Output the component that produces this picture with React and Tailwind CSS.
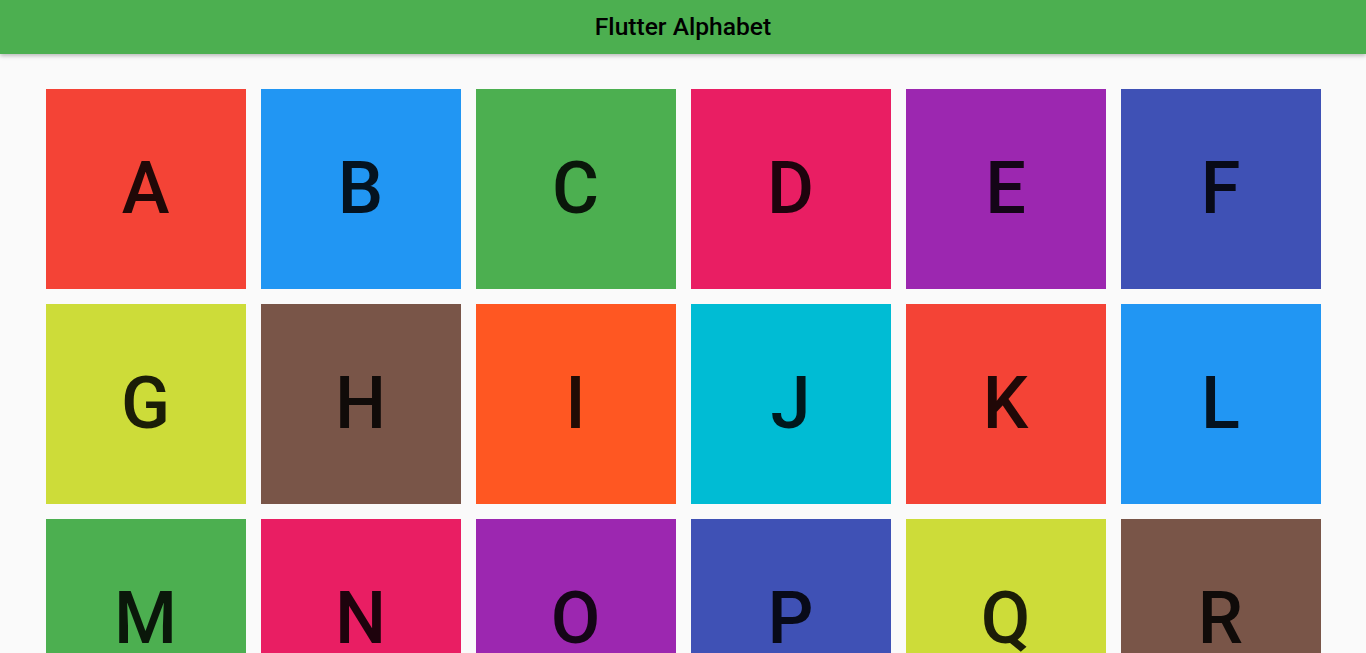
const colors = [
  "bg-[#F44336]",
  "bg-[#2196F3]",
  "bg-[#4CAF50]",
  "bg-[#E91E63]",
  "bg-[#9C27B0]",
  "bg-[#3F51B5]",
  "bg-[#CDDC39]",
  "bg-[#795548]",
  "bg-[#FF5722]",
  "bg-[#00BCD4]",
];

const letters = "ABCDEFGHIJKLMNOPQRSTUVWXYZ".split("");

export default function App() {
  return (
    <div
      className="min-h-screen bg-[#FAFAFA]"
      style={{ fontFamily: "Roboto, 'Noto Sans', sans-serif" }}
    >
      <header className="relative z-10 h-[54px] bg-[#4CAF50] flex items-center justify-center shadow-[0_2px_4px_rgba(0,0,0,0.25)]">
        <h1 className="text-[24.6px] font-medium text-black leading-none">Flutter Alphabet</h1>
      </header>
      <main className="flex justify-center pt-[35px] pb-[35px]">
        <div className="grid grid-cols-[repeat(6,200px)] gap-[15px]">
          {letters.map((l, i) => (
            <div
              key={l}
              className={`${colors[i % 10]} w-[200px] h-[200px] flex items-center justify-center`}
            >
              <span className="text-[72px] font-medium leading-none text-black/[0.87]">{l}</span>
            </div>
          ))}
        </div>
      </main>
    </div>
  );
}
